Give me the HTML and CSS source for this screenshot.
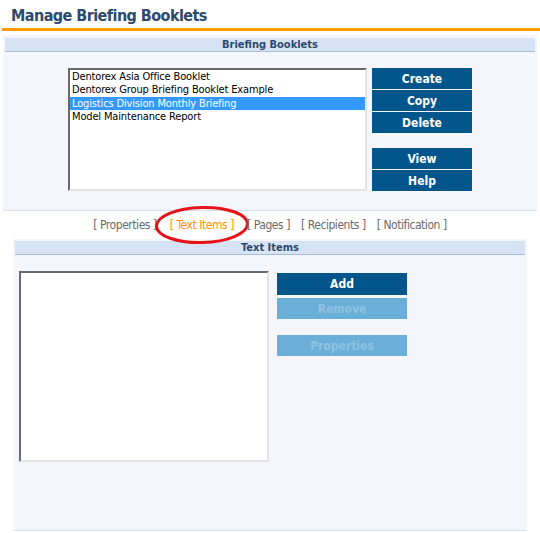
FILE: index.html
```html
<!DOCTYPE html>
<html>
<head>
<meta charset="utf-8">
<link rel="stylesheet" href="styles.css">
<title>Manage Briefing Booklets</title>
</head>
<body>
<h1 class="page-title">Manage Briefing Booklets</h1>
<div class="title-rule"></div>

<section class="panel panel-top">
  <div class="panel-head">Briefing Booklets</div>
  <div class="booklet-row">
    <div class="listbox booklet-list">
      <div class="opt">Dentorex Asia Office Booklet</div>
      <div class="opt">Dentorex Group Briefing Booklet Example</div>
      <div class="opt selected">Logistics Division Monthly Briefing</div>
      <div class="opt">Model Maintenance Report</div>
    </div>
    <div class="btn-col">
      <button class="btn">Create</button>
      <button class="btn">Copy</button>
      <button class="btn">Delete</button>
      <div class="btn-gap"></div>
      <button class="btn">View</button>
      <button class="btn">Help</button>
    </div>
  </div>
</section>

<nav class="tabs">
  <a class="tab">[ Properties ]</a>
  <a class="tab active">[ Text Items ]
    <svg class="ring" width="96" height="40" viewBox="0 0 96 40"><ellipse cx="48" cy="20" rx="45.5" ry="17.5" transform="rotate(-1.5 48 20)" fill="none" stroke="#e8131a" stroke-width="3"/></svg>
  </a>
  <a class="tab">[ Pages ]</a>
  <a class="tab">[ Recipients ]</a>
  <a class="tab">[ Notification ]</a>
</nav>

<section class="panel panel-bottom">
  <div class="panel-head">Text Items</div>
  <div class="items-row">
    <div class="listbox items-list"></div>
    <div class="btn-col wide">
      <button class="btn">Add</button>
      <button class="btn disabled">Remove</button>
      <div class="btn-gap"></div>
      <button class="btn disabled">Properties</button>
    </div>
  </div>
</section>
</body>
</html>
```

FILE: styles.css
```css
* { box-sizing: border-box; }

body {
  margin: 0;
  background: #ffffff;
  font-family: "DejaVu Sans Condensed", "DejaVu Sans", sans-serif;
  font-size: 11px;
  color: #000;
}

.page-title {
  margin: 0;
  padding: 6px 0 0 11px;
  height: 28px;
  font-size: 16px;
  font-weight: bold;
  color: #2d4a6d;
  letter-spacing: -0.55px;
}

.title-rule {
  margin-left: 2px;
  height: 3px;
  background: #ff9c00;
}

.panel {
  background: #f4f6fb;
}

.panel-top {
  margin: 4px 3px 0 3px;
  padding: 3px 2px 0 2px;
  height: 176px;
  border-bottom: 1px solid #d7e2f0;
}

.panel-head {
  height: 14px;
  line-height: 13px;
  background: #d6e3f4;
  border-bottom: 1px solid #a7bddb;
  text-align: center;
  font-weight: bold;
  font-size: 11px;
  color: #2d4a6d;
}

.booklet-row {
  display: flex;
  margin: 16px 0 0 63px;
  gap: 5px;
}

.listbox {
  background: #fff;
  border: 2px solid;
  border-color: #6a6a6a #e3e3e3 #e3e3e3 #6a6a6a;
}

.booklet-list {
  width: 299px;
  height: 123px;
}

.opt {
  height: 13.3px;
  line-height: 13px;
  padding-left: 2px;
  white-space: nowrap;
  letter-spacing: -0.15px;
}

.opt.selected {
  background: #3399ff;
  color: #fff;
}

.btn-col {
  display: flex;
  flex-direction: column;
  gap: 1px;
  width: 100px;
}

.btn-col.wide {
  width: 130px;
}

.btn {
  height: 21px;
  border: 0;
  padding: 0;
  background: #02568c;
  color: #fff;
  font-family: inherit;
  font-size: 12px;
  font-weight: bold;
  text-align: center;
}

.btn.disabled {
  background: #6aafd8;
  color: #8fc1e3;
}

.btn-gap {
  height: 13px;
}

.tabs {
  display: flex;
  justify-content: center;
  gap: 11px;
  height: 28px;
  padding: 7px 0 0 0;
  font-size: 12px;
  letter-spacing: -0.45px;
  color: #6a6a6a;
}

.tab {
  position: relative;
  white-space: nowrap;
}

.tab.active {
  color: #ff9000;
  margin: 0 2px;
}

.ring {
  position: absolute;
  left: -16px;
  top: -13px;
  pointer-events: none;
}

.panel-bottom {
  margin: 0 13px 0 13px;
  padding: 2px 2px 0 2px;
  height: 292px;
  border-bottom: 1px solid #d7e2f0;
}

.items-row {
  display: flex;
  margin: 16px 0 0 4px;
  gap: 8px;
}

.items-list {
  width: 250px;
  height: 191px;
}

.items-row .btn-col {
  margin-top: 2px;
  gap: 3px;
}

.items-row .btn {
  height: 22px;
}

.items-row .btn.disabled {
  height: 21px;
}

.items-row .btn-gap {
  height: 10px;
}
```
